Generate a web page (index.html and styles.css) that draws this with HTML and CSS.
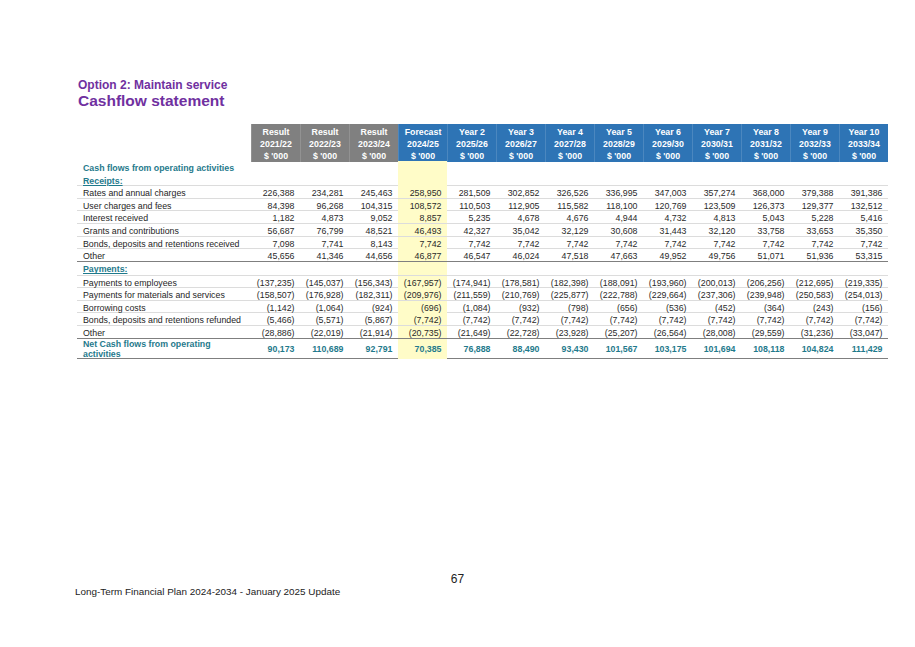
FILE: index.html
```html
<!DOCTYPE html>
<html>
<head>
<meta charset="utf-8">
<link rel="stylesheet" href="styles.css">
</head>
<body>
<div class="page">
  <div class="subtitle">Option 2: Maintain service</div>
  <div class="title">Cashflow statement</div>

  <div class="sheet">
    <div class="hrow">
      <div class="hblank"></div>
      <div class="hc grey"><div>Result</div><div>2021/22</div><div>$ '000</div></div>
      <div class="hc grey"><div>Result</div><div>2022/23</div><div>$ '000</div></div>
      <div class="hc grey"><div>Result</div><div>2023/24</div><div>$ '000</div></div>
      <div class="hc blue"><div>Forecast</div><div>2024/25</div><div>$ '000</div></div>
      <div class="hc blue"><div>Year 2</div><div>2025/26</div><div>$ '000</div></div>
      <div class="hc blue"><div>Year 3</div><div>2026/27</div><div>$ '000</div></div>
      <div class="hc blue"><div>Year 4</div><div>2027/28</div><div>$ '000</div></div>
      <div class="hc blue"><div>Year 5</div><div>2028/29</div><div>$ '000</div></div>
      <div class="hc blue"><div>Year 6</div><div>2029/30</div><div>$ '000</div></div>
      <div class="hc blue"><div>Year 7</div><div>2030/31</div><div>$ '000</div></div>
      <div class="hc blue"><div>Year 8</div><div>2031/32</div><div>$ '000</div></div>
      <div class="hc blue"><div>Year 9</div><div>2032/33</div><div>$ '000</div></div>
      <div class="hc blue"><div>Year 10</div><div>2033/34</div><div>$ '000</div></div>
    </div>

    <div class="row sec-row">
      <div class="lbl sec">Cash flows from operating activities</div>
      <div></div><div></div><div></div><div class="fc"></div><div></div><div></div><div></div><div></div><div></div><div></div><div></div><div></div><div></div>
    </div>
    <div class="row sub-row">
      <div class="lbl sub">Receipts:</div>
      <div></div><div></div><div></div><div class="fc"></div><div></div><div></div><div></div><div></div><div></div><div></div><div></div><div></div><div></div>
    </div>

    <div class="row">
      <div class="lbl">Rates and annual charges</div>
      <div class="n">226,388</div><div class="n">234,281</div><div class="n">245,463</div><div class="n fc">258,950</div><div class="n">281,509</div><div class="n">302,852</div><div class="n">326,526</div><div class="n">336,995</div><div class="n">347,003</div><div class="n">357,274</div><div class="n">368,000</div><div class="n">379,388</div><div class="n">391,386</div>
    </div>
    <div class="row">
      <div class="lbl">User charges and fees</div>
      <div class="n">84,398</div><div class="n">96,268</div><div class="n">104,315</div><div class="n fc">108,572</div><div class="n">110,503</div><div class="n">112,905</div><div class="n">115,582</div><div class="n">118,100</div><div class="n">120,769</div><div class="n">123,509</div><div class="n">126,373</div><div class="n">129,377</div><div class="n">132,512</div>
    </div>
    <div class="row">
      <div class="lbl">Interest received</div>
      <div class="n">1,182</div><div class="n">4,873</div><div class="n">9,052</div><div class="n fc">8,857</div><div class="n">5,235</div><div class="n">4,678</div><div class="n">4,676</div><div class="n">4,944</div><div class="n">4,732</div><div class="n">4,813</div><div class="n">5,043</div><div class="n">5,228</div><div class="n">5,416</div>
    </div>
    <div class="row">
      <div class="lbl">Grants and contributions</div>
      <div class="n">56,687</div><div class="n">76,799</div><div class="n">48,521</div><div class="n fc">46,493</div><div class="n">42,327</div><div class="n">35,042</div><div class="n">32,129</div><div class="n">30,608</div><div class="n">31,443</div><div class="n">32,120</div><div class="n">33,758</div><div class="n">33,653</div><div class="n">35,350</div>
    </div>
    <div class="row">
      <div class="lbl">Bonds, deposits and retentions received</div>
      <div class="n">7,098</div><div class="n">7,741</div><div class="n">8,143</div><div class="n fc">7,742</div><div class="n">7,742</div><div class="n">7,742</div><div class="n">7,742</div><div class="n">7,742</div><div class="n">7,742</div><div class="n">7,742</div><div class="n">7,742</div><div class="n">7,742</div><div class="n">7,742</div>
    </div>
    <div class="row dark">
      <div class="lbl">Other</div>
      <div class="n">45,656</div><div class="n">41,346</div><div class="n">44,656</div><div class="n fc">46,877</div><div class="n">46,547</div><div class="n">46,024</div><div class="n">47,518</div><div class="n">47,663</div><div class="n">49,952</div><div class="n">49,756</div><div class="n">51,071</div><div class="n">51,936</div><div class="n">53,315</div>
    </div>

    <div class="row pay-row">
      <div class="lbl sub">Payments:</div>
      <div></div><div></div><div></div><div class="fc"></div><div></div><div></div><div></div><div></div><div></div><div></div><div></div><div></div><div></div>
    </div>
    <div class="row">
      <div class="lbl">Payments to employees</div>
      <div class="n">(137,235)</div><div class="n">(145,037)</div><div class="n">(156,343)</div><div class="n fc">(167,957)</div><div class="n">(174,941)</div><div class="n">(178,581)</div><div class="n">(182,398)</div><div class="n">(188,091)</div><div class="n">(193,960)</div><div class="n">(200,013)</div><div class="n">(206,256)</div><div class="n">(212,695)</div><div class="n">(219,335)</div>
    </div>
    <div class="row">
      <div class="lbl">Payments for materials and services</div>
      <div class="n">(158,507)</div><div class="n">(176,928)</div><div class="n">(182,311)</div><div class="n fc">(209,976)</div><div class="n">(211,559)</div><div class="n">(210,769)</div><div class="n">(225,877)</div><div class="n">(222,788)</div><div class="n">(229,664)</div><div class="n">(237,306)</div><div class="n">(239,948)</div><div class="n">(250,583)</div><div class="n">(254,013)</div>
    </div>
    <div class="row">
      <div class="lbl">Borrowing costs</div>
      <div class="n">(1,142)</div><div class="n">(1,064)</div><div class="n">(924)</div><div class="n fc">(696)</div><div class="n">(1,084)</div><div class="n">(932)</div><div class="n">(798)</div><div class="n">(656)</div><div class="n">(536)</div><div class="n">(452)</div><div class="n">(364)</div><div class="n">(243)</div><div class="n">(156)</div>
    </div>
    <div class="row">
      <div class="lbl">Bonds, deposits and retentions refunded</div>
      <div class="n">(5,466)</div><div class="n">(5,571)</div><div class="n">(5,867)</div><div class="n fc">(7,742)</div><div class="n">(7,742)</div><div class="n">(7,742)</div><div class="n">(7,742)</div><div class="n">(7,742)</div><div class="n">(7,742)</div><div class="n">(7,742)</div><div class="n">(7,742)</div><div class="n">(7,742)</div><div class="n">(7,742)</div>
    </div>
    <div class="row dark">
      <div class="lbl">Other</div>
      <div class="n">(28,886)</div><div class="n">(22,019)</div><div class="n">(21,914)</div><div class="n fc">(20,735)</div><div class="n">(21,649)</div><div class="n">(22,728)</div><div class="n">(23,928)</div><div class="n">(25,207)</div><div class="n">(26,564)</div><div class="n">(28,008)</div><div class="n">(29,559)</div><div class="n">(31,236)</div><div class="n">(33,047)</div>
    </div>

    <div class="row net dark">
      <div class="lbl sec">Net Cash flows from operating<br>activities</div>
      <div class="n">90,173</div><div class="n">110,689</div><div class="n">92,791</div><div class="n fc">70,385</div><div class="n">76,888</div><div class="n">88,490</div><div class="n">93,430</div><div class="n">101,567</div><div class="n">103,175</div><div class="n">101,694</div><div class="n">108,118</div><div class="n">104,824</div><div class="n">111,429</div>
    </div>
  </div>
</div>

<div class="footer">
  <div class="pagenum">67</div>
  <div class="doc">Long-Term Financial Plan 2024-2034 - January 2025 Update</div>
</div>
</body>
</html>
```

FILE: styles.css
```css
html, body {
  margin: 0;
  padding: 0;
  background: #ffffff;
}

body {
  font-family: "Liberation Sans", Arial, sans-serif;
  color: #222222;
  width: 915px;
  height: 647px;
  overflow: hidden;
}

.page {
  padding: 78px 0 0 77px;
}

.subtitle {
  font-size: 12px;
  line-height: 14px;
  font-weight: bold;
  color: #7030a0;
  padding-left: 1px;
}

.title {
  font-size: 15.5px;
  line-height: 18px;
  font-weight: bold;
  color: #7030a0;
  padding-left: 1px;
}

.sheet {
  margin-top: 14px;
  width: 811px;
  font-size: 8.8px;
}

.hrow,
.row {
  display: grid;
  grid-template-columns: 174px repeat(13, 49px);
}

.hrow {
  height: 37px;
}

.hc {
  color: #ffffff;
  font-weight: bold;
  text-align: center;
  padding-top: 2px;
  box-sizing: border-box;
  border-left: 1px solid rgba(255, 255, 255, 0.14);
}

.hc > div {
  line-height: 12px;
  white-space: nowrap;
}

.grey {
  background: #808080;
}

.blue {
  background: #2e74b5;
}

.row {
  box-sizing: border-box;
  height: 12.65px;
  border-bottom: 1px solid #dcdcdc;
}

.row > div {
  padding-top: 3px;
  line-height: 9px;
  white-space: nowrap;
  box-sizing: border-box;
}

.row.dark {
  border-bottom-color: #7f7f7f;
}

.sec-row {
  height: 13px;
  border-bottom: none;
}

.sub-row {
  height: 12px;
}

.sub-row > div {
  padding-top: 3px;
  line-height: 8.5px;
}

.pay-row {
  height: 13.7px;
}

.pay-row > div {
  padding-top: 3.5px;
}

.lbl {
  padding-left: 6px;
  color: #1e1e1e;
}

.sec {
  color: #1f7a8c;
  font-weight: bold;
}

.sub {
  color: #1f7a8c;
  font-weight: bold;
  text-decoration: underline;
}

.n {
  text-align: right;
  padding-right: 5.5px;
  color: #2a2a2a;
}

.fc {
  background: #fffcc8;
}

.row.net {
  height: 20.4px;
}

.row.net > div {
  padding-top: 0.5px;
  line-height: 10px;
}

.row.net > .n {
  display: flex;
  align-items: center;
  justify-content: flex-end;
  font-weight: bold;
  color: #1f7a8c;
}

.footer {
  margin-top: 213px;
}

.pagenum {
  width: 915px;
  text-align: center;
  font-size: 12px;
  line-height: 14px;
  color: #222222;
}

.doc {
  padding-left: 75px;
  font-size: 9.9px;
  line-height: 12px;
  color: #222222;
}
```
